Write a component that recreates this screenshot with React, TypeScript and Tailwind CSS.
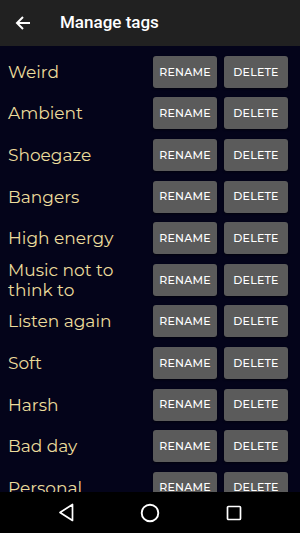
import React from 'react';

const tags = [
  'Weird',
  'Ambient',
  'Shoegaze',
  'Bangers',
  'High energy',
  'Music not to think to',
  'Listen again',
  'Soft',
  'Harsh',
  'Bad day',
  'Personal',
];

const TagRow = ({ name }: { name: string }) => (
  <div className="flex items-center h-[41.6px] shrink-0 pl-2 pr-3">
    <div className="flex-1 min-w-0 pr-2 text-[17px] leading-[20px] text-[#ecdc9c] font-['Montserrat','Noto_Sans',sans-serif]">
      {name}
    </div>
    <button className="w-16 h-8 rounded-[3px] bg-[#5b5b5b] text-white text-[11px] font-medium tracking-[0.2px] font-['Montserrat','Noto_Sans',sans-serif] shadow-[0_1px_2px_rgba(0,0,0,0.5)]">
      RENAME
    </button>
    <button className="ml-[7px] w-16 h-8 rounded-[3px] bg-[#5b5b5b] text-white text-[11px] font-medium tracking-[0.2px] font-['Montserrat','Noto_Sans',sans-serif] shadow-[0_1px_2px_rgba(0,0,0,0.5)]">
      DELETE
    </button>
  </div>
);

export default function App() {
  return (
    <div className="w-[300px] h-[533px] flex flex-col bg-[#04041a] overflow-hidden font-['Roboto',sans-serif]">
      {/* Toolbar */}
      <div className="h-[46px] shrink-0 bg-[#212121] flex items-center">
        <svg className="ml-[15px]" width="16" height="16" viewBox="0 0 16 16">
          <path d="M15 8H2M8 2L2 8l6 6" stroke="white" strokeWidth="2" fill="none" />
        </svg>
        <span className="ml-[29px] text-white text-[17px] font-medium">Manage tags</span>
      </div>

      {/* Tag list */}
      <div className="flex-1 min-h-0 overflow-hidden flex flex-col pt-[5px]">
        {tags.map((t) => (
          <TagRow key={t} name={t} />
        ))}
      </div>

      {/* Nav bar */}
      <div className="h-[41px] shrink-0 bg-black flex items-center justify-between px-[58px]">
        <svg width="16" height="19" viewBox="0 0 16 19">
          <path d="M14.5 1.5v16L2 9.5z" stroke="white" strokeWidth="1.7" fill="none" strokeLinejoin="round" />
        </svg>
        <svg width="20" height="20" viewBox="0 0 20 20">
          <circle cx="10" cy="10" r="8.3" stroke="white" strokeWidth="1.9" fill="none" />
        </svg>
        <svg width="16" height="16" viewBox="0 0 16 16">
          <rect x="1.5" y="1.5" width="13" height="13" rx="1" stroke="white" strokeWidth="1.7" fill="none" />
        </svg>
      </div>
    </div>
  );
}
